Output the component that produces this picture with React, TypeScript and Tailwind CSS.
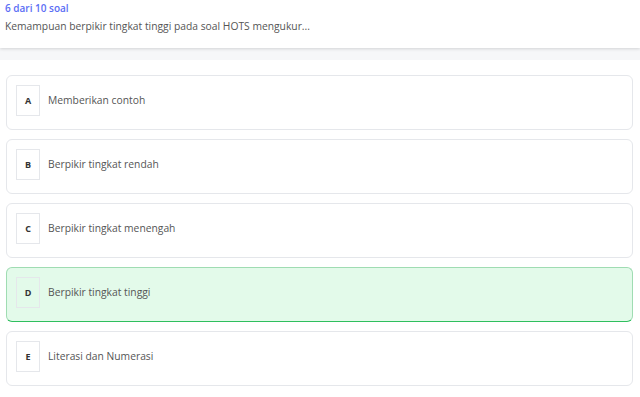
import React from 'react';

const options = [
  { key: 'A', text: 'Memberikan contoh' },
  { key: 'B', text: 'Berpikir tingkat rendah' },
  { key: 'C', text: 'Berpikir tingkat menengah' },
  { key: 'D', text: 'Berpikir tingkat tinggi', selected: true },
  { key: 'E', text: 'Literasi dan Numerasi' },
];

export default function App() {
  return (
    <div className="min-h-[397px] w-[640px] bg-white font-['Open_Sans',sans-serif] text-[#4b5563]">
      {/* Header */}
      <div className="h-[48px] bg-white px-[5px] pt-[1px] shadow-[0_1px_3px_rgba(0,0,0,0.15)] relative">
        <p className="text-[10px] font-semibold leading-[14px] text-[#5b6ef5]">6 dari 10 soal</p>
        <p className="mt-[4px] text-[10.3px] leading-[14px] text-[#555]">
          Kemampuan berpikir tingkat tinggi pada soal HOTS mengukur...
        </p>
      </div>
      <div className="h-[12px] bg-[#f6f7f9]" />

      {/* Options */}
      <div className="flex flex-col gap-[9px] px-[6px] pt-[15px] pr-[7px]">
        {options.map((o) => (
          <div
            key={o.key}
            className={`flex h-[55px] items-center gap-[8px] rounded-[6px] border px-[9px] pb-[4px] ${
              o.selected
                ? 'border-[#9fdcb2] border-b-[#2fbf5e] bg-[#e3faea]'
                : 'border-[#e5e7eb] bg-white'
            }`}
          >
            <div className="flex h-[31px] w-[24px] items-center justify-center border border-[#e5e7eb] text-[9px] font-bold text-[#333]">
              {o.key}
            </div>
            <span className="text-[10.3px] text-[#555]">{o.text}</span>
          </div>
        ))}
      </div>
    </div>
  );
}
